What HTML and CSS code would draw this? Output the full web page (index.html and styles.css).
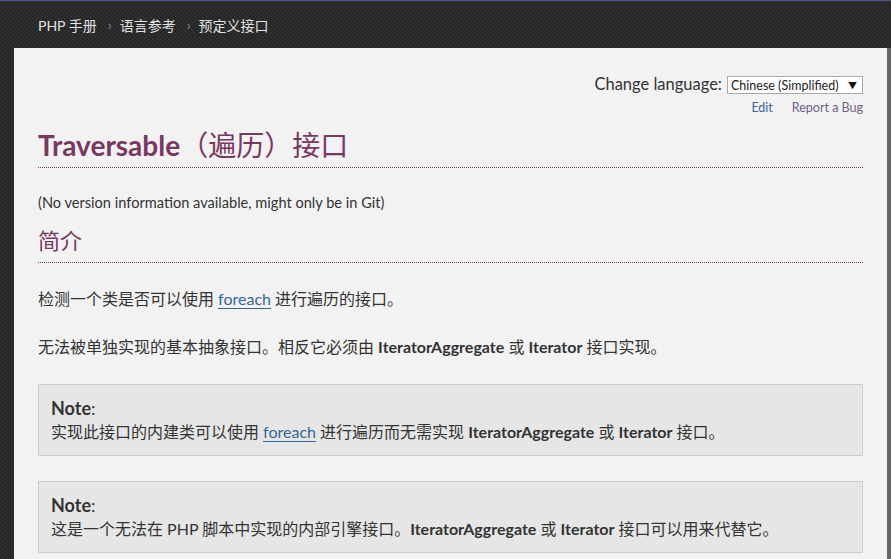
FILE: index.html
```html
<!DOCTYPE html>
<html lang="zh-CN">
<head>
  <meta charset="UTF-8" />
  <title>Traversable（遍历）接口 - PHP 手册</title>
  <link rel="stylesheet" href="styles.css">
</head>
<body>
  <nav class="topbar">
    <a class="crumb" href="#">PHP 手册</a>
    <span class="sep">›</span>
    <a class="crumb" href="#">语言参考</a>
    <span class="sep">›</span>
    <a class="crumb" href="#">预定义接口</a>
  </nav>

  <main class="page">
    <div class="lang-row">
      <span class="lang-label">Change language:</span>
      <span class="lang-select">Chinese (Simplified)<span class="arrow">▼</span></span>
    </div>
    <div class="edit-row">
      <a class="edit" href="#">Edit</a>
      <a class="bug" href="#">Report a Bug</a>
    </div>

    <h1 class="title"><b>Traversable</b>（遍历）接口</h1>
    <p class="verinfo">(No version information available, might only be in Git)</p>

    <h2 class="section">简介</h2>
    <p class="para">检测一个类是否可以使用 <a class="link" href="#">foreach</a> 进行遍历的接口。</p>
    <p class="para">无法被单独实现的基本抽象接口。相反它必须由 <b>IteratorAggregate</b> 或 <b>Iterator</b> 接口实现。</p>

    <div class="note">
      <p class="note-title"><b>Note</b>:</p>
      <p class="note-text">实现此接口的内建类可以使用 <a class="link" href="#">foreach</a> 进行遍历而无需实现 <b>IteratorAggregate</b> 或 <b>Iterator</b> 接口。</p>
    </div>

    <div class="note">
      <p class="note-title"><b>Note</b>:</p>
      <p class="note-text">这是一个无法在 PHP 脚本中实现的内部引擎接口。<b>IteratorAggregate</b> 或 <b>Iterator</b> 接口可以用来代替它。</p>
    </div>
  </main>
</body>
</html>
```

FILE: styles.css
```css
body {
  margin: 0;
  font-family: Lato, "Noto Sans CJK SC", sans-serif;
  color: #333;
  background-color: #2a2a2a;
  background-image: conic-gradient(#2e2e2e 25%, #272727 0 50%, #2e2e2e 0 75%, #272727 0);
  background-size: 4px 4px;
  min-height: 100vh;
}

a {
  text-decoration: none;
}

.topbar {
  height: 47px;
  border-top: 1px solid #4f5593;
  display: flex;
  align-items: center;
  padding-left: 38px;
  font-size: 14px;
}

.crumb {
  color: #e2e2e2;
}

.sep {
  color: #7f8fa8;
  margin: 0 8px 0 11px;
  font-size: 14px;
}

.page {
  margin-left: 14px;
  background: #f2f2f2;
  border-right: 4px solid #666;
  padding: 24px 24px 40px;
  min-height: 600px;
}

.lang-row {
  display: flex;
  justify-content: flex-end;
  align-items: center;
  height: 24px;
}

.lang-label {
  font-size: 16.5px;
  color: #333;
  margin-right: 5px;
}

.lang-select {
  display: flex;
  align-items: center;
  justify-content: space-between;
  width: 131px;
  height: 16px;
  padding: 0 0 0 3px;
  box-sizing: content-box;
  background: #fff;
  border: 1px solid #a9a9a9;
  font-size: 12.5px;
  color: #222;
  margin-top: 2px;
}

.arrow {
  font-size: 9px;
  margin-right: 5px;
  color: #111;
}

.edit-row {
  display: flex;
  justify-content: flex-end;
  gap: 19px;
  line-height: 24px;
  font-size: 12.5px;
}

.edit {
  color: #39679f;
}

.bug {
  color: #6e5f8a;
}

.title {
  margin: 5px 0 0;
  font-size: 28px;
  line-height: 40px;
  font-weight: normal;
  color: #793862;
  padding-bottom: 2px;
  border-bottom: 1px dotted #793862;
}

.title b {
  font-weight: bold;
}

.verinfo {
  margin: 23px 0 0;
  font-size: 14.6px;
  line-height: 24px;
}

.section {
  margin: 8px 0 0;
  font-size: 22px;
  line-height: 36px;
  font-weight: normal;
  color: #793862;
  padding-bottom: 3px;
  border-bottom: 1px dotted #793862;
}

.para {
  margin: 24px 0 0;
  font-size: 16px;
  line-height: 24px;
}

.link {
  color: #369;
  border-bottom: 1px solid #369;
}

.note {
  margin-top: 25px;
  background: #e6e6e6;
  border: 1px solid #ccc;
  padding: 11px 12px;
}

.note-title {
  margin: 0;
  font-size: 18px;
  line-height: 24px;
}

.note-text {
  margin: 0;
  font-size: 16px;
  line-height: 24px;
}
```
